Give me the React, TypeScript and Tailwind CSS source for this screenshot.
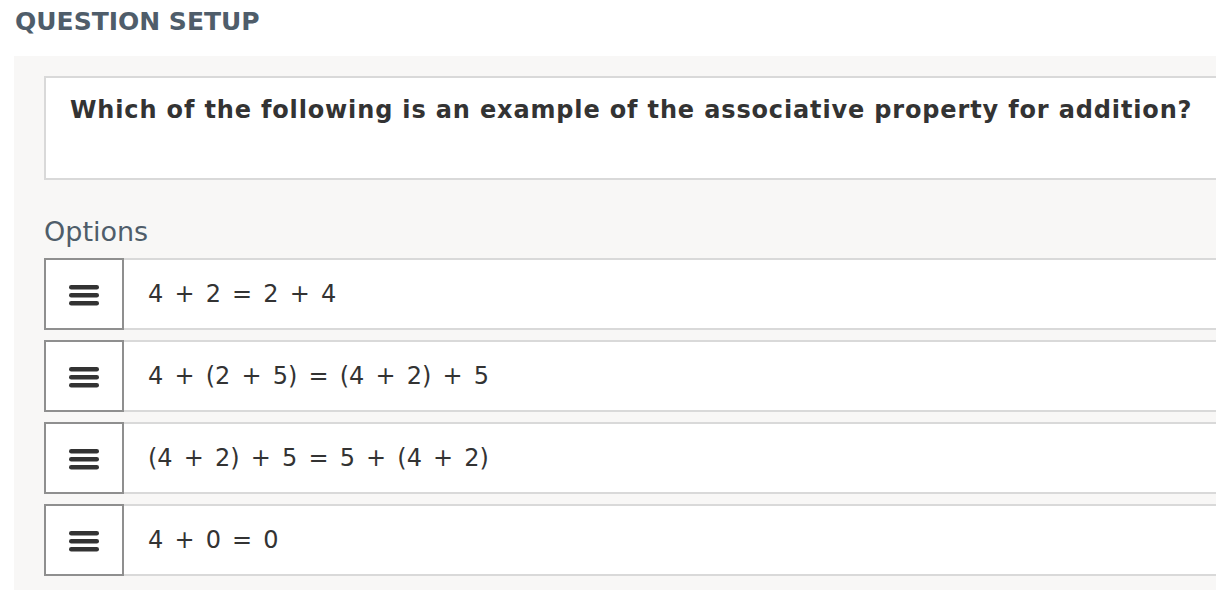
import React from "react";

const options = [
  "4 + 2 = 2 + 4",
  "4 + (2 + 5) = (4 + 2) + 5",
  "(4 + 2) + 5 = 5 + (4 + 2)",
  "4 + 0 = 0",
];

function Bars() {
  return (
    <svg width="30" height="24" viewBox="0 0 30 24" className="block">
      <rect x="0" y="3" width="30" height="4.5" rx="2.25" fill="#333" />
      <rect x="0" y="11" width="30" height="4.5" rx="2.25" fill="#333" />
      <rect x="0" y="19" width="30" height="4.5" rx="2.25" fill="#333" />
    </svg>
  );
}

export default function App() {
  return (
    <div
      className="w-[1216px] h-[590px] overflow-hidden bg-white"
      style={{ fontFamily: '"DejaVu Sans", "Noto Sans", sans-serif' }}
    >
      <h1 className="pl-[15px] pt-[4px] h-[56px] text-[25px] font-bold text-[#4f5d6a] leading-[36px]">
        QUESTION SETUP
      </h1>
      <div className="ml-[14px] bg-[#f8f7f6] pl-[30px] pt-[20px] h-[534px] w-[1300px]">
        <div className="h-[104px] border-2 border-[#d9d9d9] bg-white pl-[24px] pt-[14px]">
          <p className="text-[24px] font-bold text-[#333] leading-[36px] tracking-[0.85px]">
            Which of the following is an example of the associative property for addition?
          </p>
        </div>
        <div className="mt-[34px] text-[27px] text-[#4f5d6a] leading-[36px] h-[44px]">Options</div>
        <div className="flex flex-col gap-[10px]">
          {options.map((o) => (
            <div key={o} className="flex h-[72px]">
              <div className="w-[80px] shrink-0 border-2 border-[#8f8f8f] bg-white flex items-center justify-center">
                <Bars />
              </div>
              <div className="flex-1 border-y-2 border-[#d9d9d9] bg-white flex items-center pl-[24px] text-[24px] text-[#333] [word-spacing:3.5px]">
                {o}
              </div>
            </div>
          ))}
        </div>
      </div>
    </div>
  );
}
